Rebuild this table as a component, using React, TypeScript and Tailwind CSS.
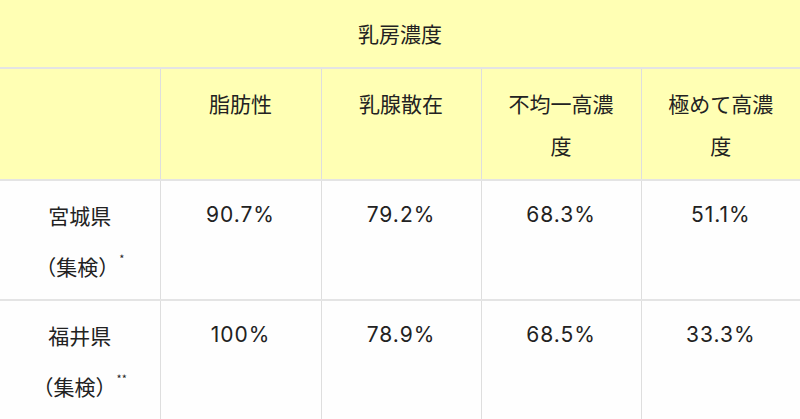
const rows = [
  { pref: "宮城県", mark: "*", values: ["90.7%", "79.2%", "68.3%", "51.1%"] },
  { pref: "福井県", mark: "**", values: ["100%", "78.9%", "68.5%", "33.3%"] },
];

const heads: string[][] = [["脂肪性"], ["乳腺散在"], ["不均一高濃", "度"], ["極めて高濃", "度"]];

export default function App() {
  return (
    <div
      className="h-[419px] w-[800px] overflow-hidden bg-[#fefefe] text-[21px] text-[#222]"
      style={{ fontFamily: '"Noto Sans CJK JP", "Noto Sans", sans-serif' }}
    >
      <table className="w-full table-fixed border-collapse text-center">
        <colgroup>
          <col className="w-[160px]" />
          <col className="w-[161px]" />
          <col className="w-[160px]" />
          <col className="w-[160px]" />
          <col className="w-[159px]" />
        </colgroup>
        <thead className="bg-[#ffffb4]">
          <tr className="border-b-2 border-[#e4e4e4]">
            <th colSpan={5} className="px-4 pb-[13px] pt-[12px] font-normal leading-[42px]">
              乳房濃度
            </th>
          </tr>
          <tr className="border-b-2 border-[#e4e4e4]">
            <th className="py-[13px]" />
            {heads.map((lines) => (
              <th
                key={lines.join("")}
                className="border-l border-[#dedede] px-3 py-[13px] align-top font-normal leading-[42px]"
              >
                {lines.map((l) => (
                  <div key={l}>{l}</div>
                ))}
              </th>
            ))}
          </tr>
        </thead>
        <tbody>
          {rows.map((r) => (
            <tr key={r.pref} className="border-b-2 border-[#e4e4e4]">
              <td className="px-3 pb-[12px] pt-[13px] align-top leading-[42px]">
                <div>{r.pref}</div>
                <div className="pt-[9px]">
                  （集検）
                  <span className="relative top-[-12px] text-[11px] leading-none">{r.mark}</span>
                </div>
              </td>
              {r.values.map((v, i) => (
                <td
                  key={i}
                  className="border-l border-[#dedede] px-3 py-[13px] align-top font-['Inter',sans-serif] font-normal leading-[42px] tracking-[1px]"
                >
                  {v}
                </td>
              ))}
            </tr>
          ))}
        </tbody>
      </table>
    </div>
  );
}
